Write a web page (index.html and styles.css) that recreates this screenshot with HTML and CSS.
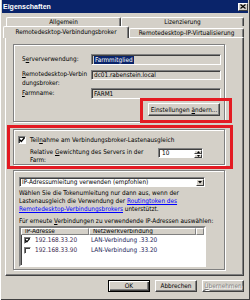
FILE: index.html
```html
<!DOCTYPE html>
<html lang="de">
<head>
<meta charset="utf-8">
<title>Eigenschaften</title>
<link rel="stylesheet" href="styles.css">
</head>
<body>
<div class="window">
  <div class="titlebar">
    <span class="title">Eigenschaften</span>
    <span class="close"><svg width="6" height="5" viewBox="0 0 6 5"><path d="M0.5 0.5 L5.5 4.5 M5.5 0.5 L0.5 4.5" stroke="#000" stroke-width="1.2"/></svg></span>
  </div>
  <div class="tabrow back">
    <div class="tab t-allg">Allgemein</div>
    <div class="tab t-liz">Lizenzierung</div>
  </div>
  <div class="tabrow front">
    <div class="tab sel">Remotedesktop-Verbindungsbroker</div>
    <div class="tab t-ip">Remotedesktop-IP-Virtualisierung</div>
  </div>
  <div class="panel">
    <div class="group g1">
      <div class="field f1">
        <span class="label">S<u>e</u>rververwendung:</span>
        <div class="input"><span class="hl">Farmmitglied</span></div>
      </div>
      <div class="field f2">
        <span class="label"><u>R</u>emotedesktop-Verbin<br>dungsbroker:</span>
        <div class="input">dc01.rabenstein.local</div>
      </div>
      <div class="field f3">
        <span class="label"><u>F</u>armname:</span>
        <div class="input">FARM1</div>
      </div>
      <div class="btnrow"><button class="btn">Einstellungen <u>ä</u>ndern...</button></div>
    </div>
    <div class="group g2">
      <div class="check-row">
        <span class="cb"><svg width="6" height="6" viewBox="0 0 6 6"><path d="M0.5 2.5 L2.3 4.5 L5.5 0.8" fill="none" stroke="#000" stroke-width="1.3"/></svg></span>
        <span class="cb-text">Teil<u>n</u>ahme am Verbindungsbroker-Lastenausgleich</span>
      </div>
      <div class="weight">
        <span class="wlabel">Relative <u>G</u>ewichtung des Servers in der<br>Farm:</span>
        <div class="spin">
          <span class="spin-val">10</span>
          <span class="spin-btns">
            <span class="sb"><svg width="5" height="3" viewBox="0 0 5 3"><path d="M0 3 L2.5 0 L5 3Z" fill="#000"/></svg></span>
            <span class="sb"><svg width="5" height="3" viewBox="0 0 5 3"><path d="M0 0 L2.5 3 L5 0Z" fill="#000"/></svg></span>
          </span>
        </div>
      </div>
    </div>
    <div class="group g3">
      <div class="select">
        <span class="sel-text">IP-Adressumleitung verwenden (empfohlen)</span>
        <span class="sel-btn"><svg width="5" height="3" viewBox="0 0 5 3"><path d="M0 0 L2.5 3 L5 0Z" fill="#000"/></svg></span>
      </div>
      <p class="info">Wählen Sie die Tokenumleitung nur dann aus, wenn der<br>Lastenausgleich die Verwendung der <a class="link">Routingtoken des<br>Remotedesktop-Verbindungsbrokers</a> unterstützt.</p>
      <p class="pick">Für erneute <u>V</u>erbindungen zu verwendende IP-Adressen auswählen:</p>
      <div class="list">
        <div class="lhead">
          <span class="hc h1">IP-Adresse</span>
          <span class="hc h2">Netzwerkverbindung</span>
          <span class="hc h3"></span>
        </div>
        <div class="lrow">
          <span class="lcb"><svg width="5" height="5" viewBox="0 0 5 5"><path d="M0.4 2 L1.9 3.8 L4.6 0.6" fill="none" stroke="#000" stroke-width="1.2"/></svg></span>
          <span class="ip">192.168.33.20</span>
          <span class="lan">LAN-Verbindung .33.20</span>
        </div>
        <div class="lrow">
          <span class="lcb"></span>
          <span class="ip">192.168.33.90</span>
          <span class="lan">LAN-Verbindung .33.20</span>
        </div>
      </div>
    </div>
  </div>
  <div class="actions">
    <button class="btn dlg default">OK</button>
    <button class="btn dlg">Abbrechen</button>
    <button class="btn dlg disabled"><u>Ü</u>bernehmen</button>
  </div>
  <div class="mark m1"></div>
  <div class="mark m2"></div>
</div>
</body>
</html>
```
FILE: styles.css
```css
* { box-sizing: border-box; }

body {
  margin: 0;
  font-family: "DejaVu Sans Condensed", "Liberation Sans", Arial, sans-serif;
  font-size: 6.4px;
  color: #000;
}

.window {
  position: relative;
  width: 250px;
  height: 300px;
  background: #d4d0c8;
  padding: 0 2px;
  box-shadow: inset 1px 0 0 #ffffff, inset -1px -1px 0 #404040;
  display: flex;
  flex-direction: column;
}

.titlebar {
  height: 13px;
  flex: none;
  background: #0a246a;
  color: #fff;
  font-family: "Liberation Sans", Arial, sans-serif;
  font-weight: bold;
  font-size: 7px;
  display: flex;
  align-items: center;
  justify-content: space-between;
  padding-left: 1px;
}

.close {
  width: 10px;
  height: 8px;
  background: #d4d0c8;
  border: 1px solid;
  border-color: #fff #404040 #404040 #fff;
  display: flex;
  align-items: center;
  justify-content: center;
}

.tabrow { display: flex; flex: none; }

.tabrow.back {
  margin-top: 4px;
  margin-left: 4px;
  width: 238px;
  height: 9px;
}

.tabrow.front {
  margin-left: 1px;
  height: 11px;
  align-items: flex-end;
  position: relative;
  z-index: 1;
}

.tab {
  background: #d4d0c8;
  border: 1px solid;
  border-color: #fff #404040 transparent #fff;
  border-bottom: none;
  border-radius: 2px 2px 0 0;
  box-shadow: inset -1px 0 0 #808080;
  display: flex;
  align-items: center;
  justify-content: center;
  white-space: nowrap;
  line-height: 8px;
}

.t-allg { width: 115px; height: 9px; }
.t-liz { width: 123px; height: 9px; }
.tab.sel { width: 126px; height: 12px; margin-bottom: -1px; padding-bottom: 1px; }
.t-ip { width: 115px; height: 9px; }

.panel {
  flex: none;
  margin-left: 3px;
  width: 239px;
  height: 239px;
  border: 1px solid;
  border-color: #fff #404040 #404040 #fff;
  box-shadow: inset -1px -1px 0 #808080;
  padding: 6px 0 0 7px;
}

.group {
  width: 212px;
  border: 1px solid #808080;
  box-shadow: 1px 1px 0 #fff, inset 1px 1px 0 #fff;
}

.g1 { padding: 9px 3px 5px 8px; }

.field { display: flex; align-items: center; }
.f2 { margin-top: 5px; align-items: flex-start; }
.f3 { margin-top: 1px; }

.label { width: 69px; flex: none; line-height: 8.5px; white-space: nowrap; overflow: hidden; }

.input {
  width: 130px;
  height: 11px;
  background: #d4d0c8;
  border: 1px solid;
  border-color: #808080 #fff #fff #808080;
  box-shadow: inset 1px 1px 0 #404040;
  padding-left: 2px;
  display: flex;
  align-items: center;
  white-space: nowrap;
  line-height: 8px;
}
.f2 .input { height: 10px; }

.hl { background: #0a246a; color: #fff; padding: 0 1px; line-height: 8px; }

.btnrow { display: flex; justify-content: flex-end; margin-top: 4px; padding-right: 1px; }

.btn {
  font: inherit;
  color: #000;
  width: 72px;
  height: 13px;
  padding: 0;
  background: #d4d0c8;
  border: 1px solid;
  border-color: #fff #404040 #404040 #fff;
  box-shadow: inset -1px -1px 0 #808080;
  white-space: nowrap;
  line-height: 8px;
}

.g2 { margin-top: 7px; height: 36px; padding: 5px 0 0 4px; }

.check-row { display: flex; align-items: center; height: 9px; }

.cb, .lcb {
  width: 8px;
  height: 8px;
  background: #fff;
  border: 1px solid;
  border-color: #808080 #fff #fff #808080;
  box-shadow: inset 1px 1px 0 #404040;
  display: flex;
  align-items: center;
  justify-content: center;
  flex: none;
}

.cb-text { margin-left: 4px; white-space: nowrap; line-height: 8px; }

.weight { display: flex; align-items: flex-start; margin-top: 4px; padding-left: 12px; }
.wlabel { width: 128px; line-height: 8px; white-space: nowrap; }

.spin {
  width: 45px;
  height: 10px;
  background: #fff;
  border: 1px solid;
  border-color: #808080 #fff #fff #808080;
  box-shadow: inset 1px 1px 0 #404040;
  display: flex;
  align-items: stretch;
}
.spin-val { flex: 1; padding-left: 3px; line-height: 8px; }
.spin-btns { width: 8px; display: flex; flex-direction: column; padding: 1px 0 0 0; }
.sb {
  flex: 1;
  background: #d4d0c8;
  border: 1px solid;
  border-color: #fff #404040 #404040 #fff;
  display: flex;
  align-items: center;
  justify-content: center;
}
.sb svg { width: 3px; height: 2px; }

.g3 { margin-top: 5px; height: 100px; padding: 6px 0 0 5px; }

.select {
  width: 186px;
  height: 10px;
  background: #fff;
  border: 1px solid;
  border-color: #808080 #fff #fff #808080;
  box-shadow: inset 1px 1px 0 #404040;
  display: flex;
  align-items: stretch;
}
.sel-text { flex: 1; padding-left: 2px; line-height: 8px; white-space: nowrap; }
.sel-btn {
  width: 8px;
  margin: 1px 0 0 0;
  background: #d4d0c8;
  border: 1px solid;
  border-color: #fff #404040 #404040 #fff;
  display: flex;
  align-items: center;
  justify-content: center;
}
.sel-btn svg { width: 4px; height: 2.5px; }

.info { margin: 2px 0 0 0; line-height: 8px; white-space: nowrap; }
.link { color: #0000ff; text-decoration: underline; }
.pick { margin: 4px 0 0 0; line-height: 8px; white-space: nowrap; }

.list {
  margin-top: 1px;
  width: 187px;
  height: 41px;
  background: #fff;
  border: 2px solid;
  border-color: #808080 #fff #fff #808080;
  box-shadow: inset 1px 1px 0 #404040;
}

.lhead { display: flex; height: 7px; }
.hc {
  height: 7px;
  background: #d4d0c8;
  border: 1px solid;
  border-color: #fff #808080 #808080 #fff;
  padding-left: 3px;
  line-height: 5px;
  white-space: nowrap;
  overflow: hidden;
}
.h1 { width: 68px; }
.h2 { width: 107px; }
.h3 { flex: 1; }

.lrow { display: flex; align-items: center; height: 10px; padding-left: 3px; white-space: nowrap; line-height: 8px; }
.lcb { width: 7px; height: 7px; }
.ip { width: 56px; margin-left: 4px; color: #3a1f4e; }
.lan { color: #1c2458; }

.actions {
  flex: none;
  display: flex;
  justify-content: flex-end;
  gap: 5px;
  margin-top: 4px;
  padding-right: 4px;
}

.btn.dlg { width: 42px; height: 12px; }
.btn.default {
  border: 1px solid #000;
  box-shadow: inset 1px 1px 0 #fff, inset -1px -1px 0 #404040, inset -2px -2px 0 #808080;
}
.btn.disabled { color: #808080; text-shadow: 1px 1px 0 #fff; }

.mark {
  position: absolute;
  border: 3px solid #e31a22;
  z-index: 5;
}
.m1 { left: 140px; top: 98px; width: 92px; height: 25px; }
.m2 { left: 7px; top: 125px; width: 226px; height: 44px; }
```
